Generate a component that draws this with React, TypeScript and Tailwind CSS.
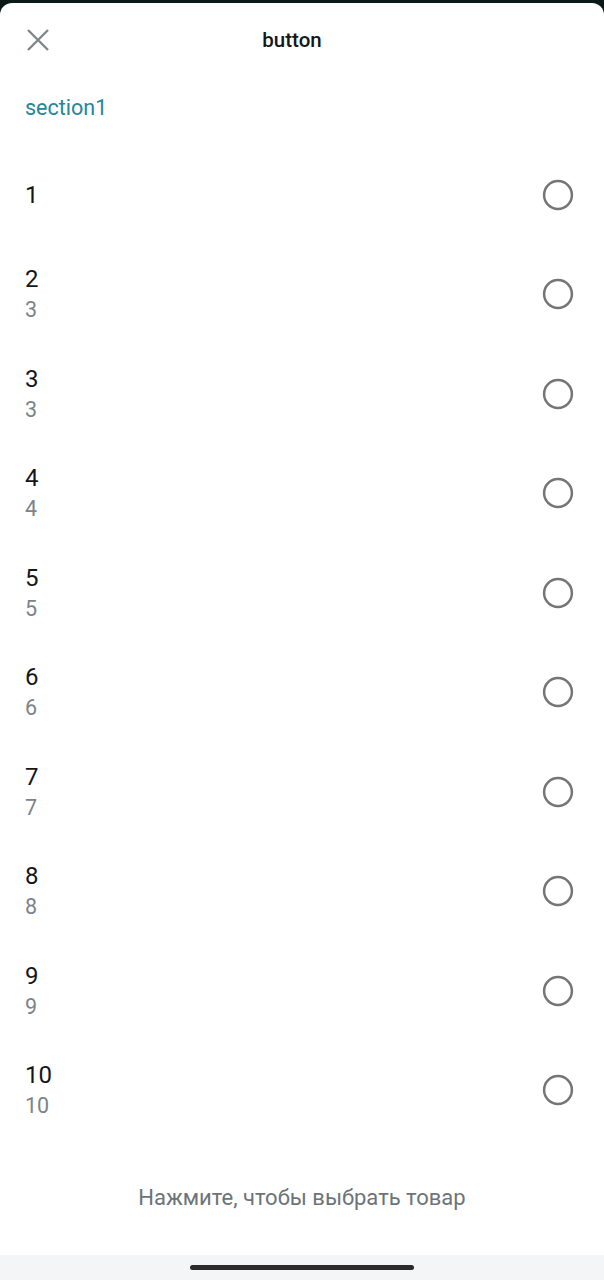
import React from "react";

const rows: { t: string; s?: string }[] = [
  { t: "1" },
  { t: "2", s: "3" },
  { t: "3", s: "3" },
  { t: "4", s: "4" },
  { t: "5", s: "5" },
  { t: "6", s: "6" },
  { t: "7", s: "7" },
  { t: "8", s: "8" },
  { t: "9", s: "9" },
  { t: "10", s: "10" },
];

function Radio() {
  return (
    <svg width="32" height="32" viewBox="0 0 32 32" className="shrink-0">
      <circle cx="16" cy="16" r="13.9" fill="none" stroke="#757575" strokeWidth="2.5" />
    </svg>
  );
}

export default function App() {
  return (
    <div
      className="w-[604px] h-[1280px] bg-[#0c1a17] flex flex-col overflow-hidden"
      style={{ fontFamily: "Roboto, 'Noto Sans', sans-serif" }}
    >
      <div className="mt-[3px] flex-1 bg-white rounded-t-[12px] flex flex-col">
        <div className="h-[74px] flex items-center relative">
          <div className="pl-[27px]">
            <svg width="22" height="22" viewBox="0 0 22 22">
              <path d="M1 1 L21 21 M21 1 L1 21" stroke="#7e888b" strokeWidth="2.4" fill="none" />
            </svg>
          </div>
          <div className="absolute inset-0 pr-[20px] flex items-center justify-center pointer-events-none">
            <span className="text-[20.5px] font-medium text-[#151719]">button</span>
          </div>
        </div>
        <div className="px-[25px] h-[63px] flex items-center">
          <span className="text-[21.5px] text-[#22879a]">section1</span>
        </div>
        <div className="h-[5px]" />
        {rows.map((r, i) => (
          <div key={i} className="h-[99.5px] flex items-center justify-between pl-[25px] pr-[30px]">
            <div className="flex flex-col">
              <span className="text-[24px] leading-[32px] text-[#141618]">{r.t}</span>
              {r.s && <span className="text-[21.5px] leading-[30px] text-[#7b8488]">{r.s}</span>}
            </div>
            <Radio />
          </div>
        ))}
        <div className="flex-1 flex items-center justify-center">
          <span className="text-[22px] text-[#6c7478]">Нажмите, чтобы выбрать товар</span>
        </div>
        <div className="h-[25px] bg-[#f4f5f7] flex justify-center pt-[10px]">
          <div className="w-[224px] h-[5px] rounded-full bg-[#2a2b2d]" />
        </div>
      </div>
    </div>
  );
}
